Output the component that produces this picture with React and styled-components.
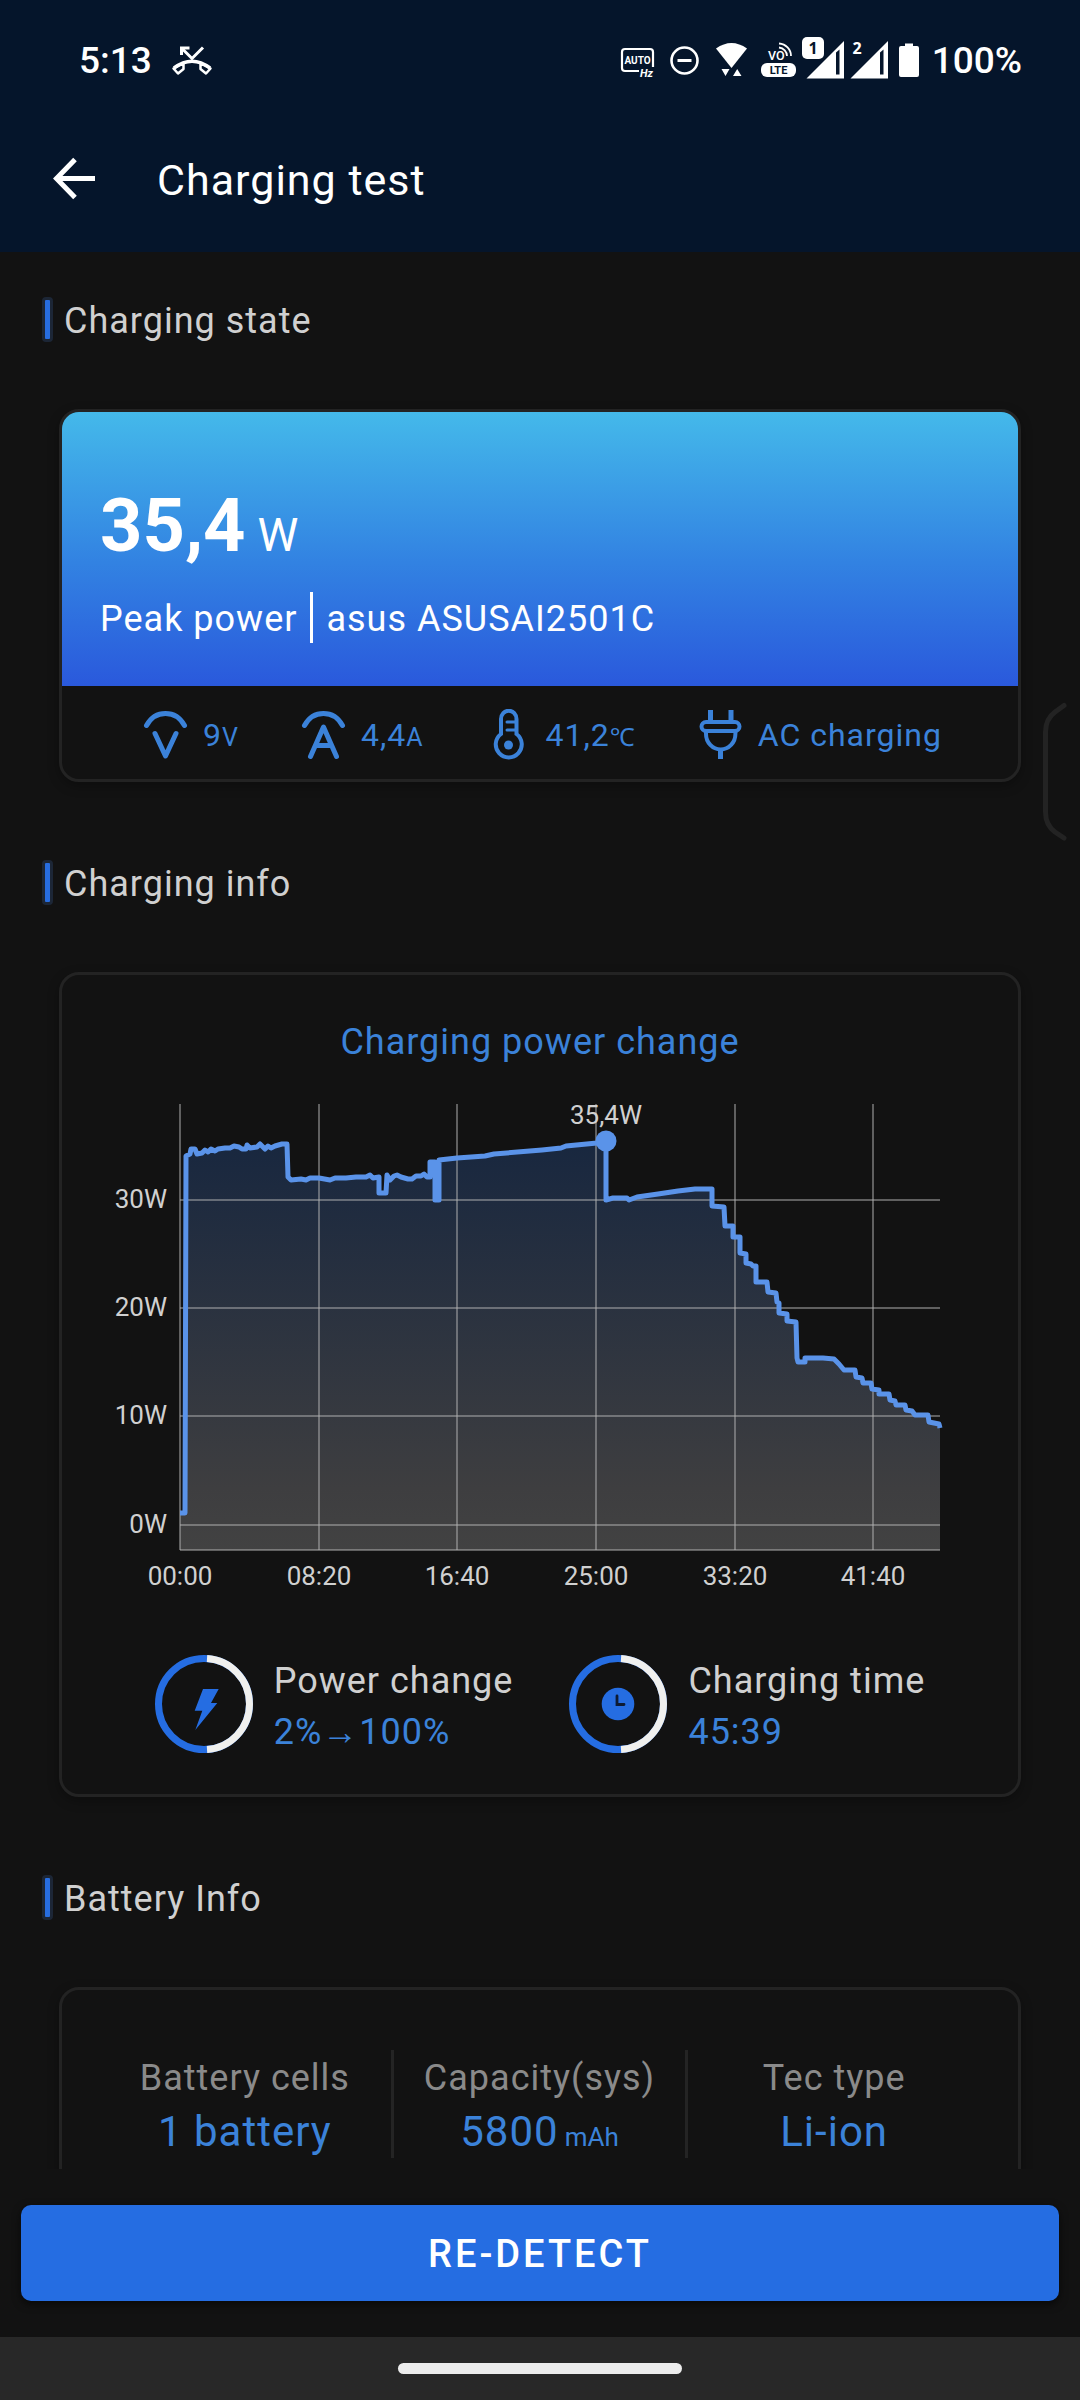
import React from "react";
import styled, { createGlobalStyle } from "styled-components";

const GlobalStyle = createGlobalStyle`
  *, *::before, *::after { box-sizing: border-box; }
  body {
    margin: 0;
    background: #121212;
    font-family: Roboto, "Noto Sans", sans-serif;
    letter-spacing: 1px;
  }
  h1, h2, h3, p, dl, dt, dd { margin: 0; font-weight: 400; }
`;

const Screen = styled.div`
  position: relative;
  display: flex;
  flex-direction: column;
  height: 100vh;
  color: #d0d0d0;
`;

const TopArea = styled.header`
  flex: none;
  background: #05152b;
  color: #fff;
`;

const StatusBar = styled.div`
  display: flex;
  align-items: center;
  justify-content: space-between;
  padding: 14px 58px 0 79px;
  height: 106px;
  font-size: 37px;
  font-weight: 500;
  letter-spacing: 0;
`;

const StatusGroup = styled.div`
  display: flex;
  align-items: center;
  gap: ${(p) => p.$gap}px;
`;

const TitleBar = styled.div`
  display: flex;
  align-items: center;
  gap: 49px;
  height: 146px;
  padding: 0 40px;
`;

const BackButton = styled.button`
  display: flex;
  align-items: center;
  justify-content: center;
  width: 68px;
  height: 68px;
  padding: 0;
  border: 0;
  background: none;
  color: inherit;
`;

const Title = styled.h1`
  padding-top: 2px;
  font-size: 43px;
`;

const Content = styled.main`
  flex: 1;
  min-height: 0;
  overflow-y: auto;
  scrollbar-width: none;
`;

const Section = styled.section`
  padding: ${(p) => (p.$first ? 45 : 78)}px 59px 0;
`;

const SectionTitle = styled.h2`
  display: flex;
  gap: 11px;
  height: 45px;
  margin: 0 0 67px -17px;
  font-size: 36px;
  line-height: 49px;

  &::before {
    content: "";
    width: 11px;
    height: 45px;
    border: 3px solid #1c2636;
    border-radius: 4px;
    background: #276de0;
  }
`;

const Card = styled.div`
  overflow: hidden;
  border: 3px solid #232323;
  border-radius: 20px;
  background: #121212;
  box-shadow: 0 4px 12px rgba(0, 0, 0, 0.3);
`;

const Hero = styled.div`
  display: flex;
  flex-direction: column;
  gap: 23px;
  padding: 71px 38px 43px;
  background: linear-gradient(#44b9ea, #3282e2 55%, #2a59dc);
  color: #fff;
`;

const PeakValue = styled.p`
  font-size: 74px;
  font-weight: 700;
  line-height: 86px;
  letter-spacing: 0;
`;

const PeakUnit = styled.span`
  margin-left: 12px;
  font-size: 46px;
  font-weight: 400;
  line-height: 46px;
`;

const PeakRow = styled.p`
  display: flex;
  gap: 13px;
  height: 51px;
  font-size: 36px;
  line-height: 55px;
`;

const PeakDivider = styled.span`
  width: 3px;
  background: #fff;
`;

const Readings = styled.div`
  display: flex;
  align-items: center;
  justify-content: center;
  gap: 62px;
  height: 93px;
  padding: 4px 0 0 5px;
`;

const Reading = styled.div`
  display: flex;
  align-items: center;
  gap: 15px;
  color: #3b82d9;
  font-size: 32px;
  white-space: nowrap;

  svg { flex: none; }
`;

const SmallUnit = styled.small`
  font-size: 25px;
`;

const ChartTitle = styled.h3`
  padding-top: 43px;
  margin-bottom: 23px;
  font-size: 36px;
  line-height: 48px;
  text-align: center;
  color: #3b82d9;
`;

const ChartSvg = styled.svg`
  display: block;
  width: 100%;
  font-size: 26px;
  letter-spacing: 0;
`;

const Summary = styled.div`
  display: flex;
  justify-content: center;
  gap: 56px;
  padding: 49px 0 36px;
`;

const SummaryItem = styled.dl`
  display: flex;
  align-items: center;
  gap: 21px;
  font-size: 36px;
  line-height: 51px;

  dd { color: #3b82d9; }
`;

const SummaryText = styled.div`
  padding-top: 6px;
`;

const BatteryGrid = styled.dl`
  display: grid;
  grid-template-columns: repeat(3, 1fr);
  padding: 60px 38px 72px 34px;
`;

const BatteryCell = styled.div`
  padding-top: 2px;
  border-left: 3px solid ${(p) => (p.$divided ? "#242424" : "transparent")};
  text-align: center;
  line-height: 53px;
  white-space: nowrap;

  dt { font-size: 36px; color: #8a8a8a; }
  dd { font-size: 42px; color: #3b82d9; }
`;

const CapacityUnit = styled.small`
  margin-left: 6px;
  font-size: 26px;
  line-height: 26px;
  letter-spacing: 0;
`;

const Footer = styled.footer`
  flex: none;
  padding: 36px 21px;
`;

const DetectButton = styled.button`
  display: block;
  width: 100%;
  height: 96px;
  padding: 2px 0 0;
  border: 0;
  border-radius: 10px;
  background: #256de2;
  box-shadow: 0 3px 8px rgba(0, 0, 0, 0.6);
  color: #fff;
  font: inherit;
  font-size: 38px;
  font-weight: 500;
  letter-spacing: 3px;
`;

const NavBar = styled.div`
  flex: none;
  display: flex;
  align-items: center;
  justify-content: center;
  height: 63px;
  background: #282828;
`;

const HomePill = styled.span`
  width: 284px;
  height: 11px;
  border-radius: 6px;
  background: #ececec;
`;

const EdgeHandle = styled.svg`
  position: absolute;
  top: 702px;
  right: 12px;
`;

function MissedCallIcon() {
  return (
    <svg width="42" height="46" viewBox="0 -8 42 46" fill="none" stroke="#fff" strokeWidth="3">
      <path d="M32 2.5 21 13.5 11 3.5" />
      <path d="M10.5 10V3H18.500" />
      <path d="M3 23Q21 9.500 39 23" strokeWidth="3.500" />
      <path d="M12.500 18.500V24L7 28.500 2.500 23.500Z M29.500 18.500V24L35 28.500 39.500 23.500Z" strokeLinejoin="round" strokeWidth="2.500" />
    </svg>
  );
}

function AutoHzIcon() {
  return (
    <svg width="42" height="46" viewBox="0 0 42 46" fontWeight="700" fill="#fff">
      <path d="M22 34H8Q5 34 5 31V15Q5 12 8 12H33Q36 12 36 15V30" fill="none" stroke="#fff" strokeWidth="2.200" />
      <text x="20.500" y="27" fontSize="10" textAnchor="middle">AUTO</text>
      <text x="23" y="39.500" fontSize="11" fontStyle="italic">Hz</text>
    </svg>
  );
}

function DoNotDisturbIcon() {
  return (
    <svg width="39" height="46" viewBox="0 0 39 46" fill="none" stroke="#fff" strokeWidth="2.600">
      <circle cx="19.500" cy="23.500" r="13" />
      <path d="M12.500 23.500H26.500" strokeWidth="3" />
    </svg>
  );
}

function WifiIcon() {
  return (
    <svg width="45" height="46" viewBox="0 0 45 46" fill="#fff">
      <path d="M6 11.500Q21.500 .5 37 11.500L21.500 31Z" />
      <path d="M11.500 32H19.500L15.500 39Z M23 39H31.500L27.200 32Z" />
    </svg>
  );
}

function VolteIcon() {
  return (
    <svg width="35" height="46" viewBox="0 0 35 46" fill="#fff">
      <text x="7" y="23" fontSize="12.500" fontWeight="500">VO</text>
      <g fill="none" stroke="#fff" strokeWidth="1.800">
        <path d="M18 6.500A13 12.500 0 0 1 30 19" />
        <path d="M18 10.500A9 8.500 0 0 1 26 19" />
      </g>
      <rect y="26" width="35" height="14" rx="6" />
      <text x="17.500" y="37.200" fontSize="11" fontWeight="700" textAnchor="middle" fill="#05152b">LTE</text>
    </svg>
  );
}

function SignalIcon({ label, badge }) {
  return (
    <svg width={badge ? 42 : 39} height="46" viewBox={badge ? "-4 0 42 46" : "0 0 39 46"} fill="#fff">
      <path d="M.5 41.500 38 4V41.500Z" />
      <path d="M30 15.500 33.500 12.500V37.500H30Z" fill="#05152b" />
      {badge && <rect x="-4" width="22" height="22" rx="5" />}
      <text x="7" y="16.500" fontSize="16" fontWeight="700" textAnchor="middle" fontFamily="Noto Sans, sans-serif" fill={badge ? "#05152b" : "#fff"}>
        {label}
      </text>
    </svg>
  );
}

function BatteryIcon() {
  return (
    <svg width="31" height="46" viewBox="0 0 31 46" fill="#fff">
      <path d="M10 9V6.500H18V9H22Q24 9 24 11V38Q24 40 22 40H6Q4 40 4 38V11Q4 9 6 9Z" />
    </svg>
  );
}

function BackIcon() {
  return (
    <svg width="44" height="44" viewBox="0 0 44 44" fill="none" stroke="#fff" strokeWidth="5">
      <path d="M23 2.500 4.500 21.500 23 40.500M4 21.500H43" />
    </svg>
  );
}

function MeterIcon({ children }) {
  return (
    <svg width="45" height="52" viewBox="0 0 45 52" fill="none" stroke="currentColor" strokeWidth="5" strokeLinecap="round" strokeLinejoin="round">
      <path d="M3.500 16.500Q10 4.500 22.500 4.500T41.500 16.500" />
      {children}
    </svg>
  );
}

function ThermometerIcon() {
  return (
    <svg width="45" height="52" viewBox="0 0 45 52" fill="none" stroke="currentColor" strokeWidth="4">
      <path d="M15 25V10A7.500 8 0 0 1 30.500 10V25A13 13 0 1 1 15 25Z" />
      <circle cx="22.500" cy="36" r="4.500" fill="currentColor" stroke="none" />
      <path d="M21 13H30M21 21H30" strokeWidth="3" strokeLinecap="round" />
    </svg>
  );
}

function PlugIcon() {
  return (
    <svg width="45" height="52" viewBox="0 0 45 52" fill="none" stroke="currentColor" strokeWidth="4">
      <path d="M12.500 1V13M33 1V13M22.500 40V50" strokeWidth="5" />
      <rect x="3.500" y="13" width="38" height="9" rx="4.500" />
      <path d="M8 22V25A14.700 15.500 0 0 0 37.400 25V22" />
    </svg>
  );
}

function Ring({ children }) {
  return (
    <svg width="98" height="98" viewBox="0 0 98 98" fill="none" strokeWidth="7">
      <circle cx="49" cy="49" r="45.500" stroke="#256de2" />
      <path d="M52 3.600A45.500 45.500 0 0 1 52 94.400" stroke="#f0f0ee" />
      {children}
    </svg>
  );
}

// Power curve in plot coordinates: x grows with time, y grows downwards.
const CURVE = `0,409 5,409 6,52 10,50 11,45 15,45 17,50 22,49 25,46 28,48 31,45 35,47 38,45 45,44 50,44
54,42 59,43 62,45 66,45 67,41 70,44 77,43 80,40 85,45 88,42 91,44 95,42 102,40 107,40 108,73 111,76
121,75 126,76 130,74 139,74 150,76 155,74 166,74 176,73 186,73 190,71 193,74 199,73 199,89 206,89
207,71 210,76 214,72 217,71 221,73 228,75 232,75 236,72 241,72 244,70 247,73 250,73 250,58 255,58
255,96 259,96 259,56 277,54 305,52 314,50 362,46 381,44 386,42 417,39 426,37 426,96 433,94 447,94
449,96 457,93 478,90 498,87 515,85 532,85 532,102 544,103 545,122 553,122 553,133 560,133 560,149
566,150 566,159 571,160 573,162 576,162 576,178 587,178 588,188 596,189 597,198 599,199 599,209
607,210 607,217 616,218 617,254 618,258 625,258 625,254 643,254 654,255 659,260 664,266 675,266
676,273 682,274 683,279 691,279 692,285 699,286 699,290 709,290 710,296 715,297 716,301 725,301
726,306 732,307 735,311 748,311 749,318 759,320 760,324`;

const TIMES = [[0, "00:00"], [139, "08:20"], [277, "16:40"], [416, "25:00"], [555, "33:20"], [693, "41:40"]];
const WATTS = [[96, "30W"], [204, "20W"], [312, "10W"], [421, "0W"]];

function PowerChart() {
  return (
    <ChartSvg viewBox="0 0 956 512" role="img" aria-label="Charging power over time">
      <defs>
        <linearGradient id="area" gradientUnits="userSpaceOnUse" x1="0" y1="37" x2="0" y2="446">
          <stop offset="0" stopColor="#18273f" />
          <stop offset="0.85" stopColor="#3e3e40" />
          <stop offset="1" stopColor="#424242" />
        </linearGradient>
      </defs>
      <g transform="translate(118 15)">
        <polygon points={`${CURVE} 760,446 0,446`} fill="url(#area)" />
        <g stroke="#b4b4b4" strokeOpacity="0.65" strokeWidth="1.500">
          {TIMES.map(([x]) => <line key={x} x1={x} x2={x} y1="0" y2="446" />)}
          {WATTS.map(([y]) => <line key={y} x1="0" x2="760" y1={y} y2={y} />)}
          <line x1="0" x2="760" y1="446" y2="446" />
        </g>
        <polyline points={CURVE} fill="none" stroke="#5a93e9" strokeWidth="5" strokeLinejoin="round" />
        <circle cx="426" cy="37" r="10.500" fill="#5a93e9" />
        <g fill="#d0d0d0">
          <text x="426" y="20" textAnchor="middle">35,4W</text>
          {TIMES.map(([x, label]) => <text key={label} x={x} y="481" textAnchor="middle">{label}</text>)}
          {WATTS.map(([y, label]) => <text key={label} x="-13" y={y + 8} textAnchor="end">{label}</text>)}
        </g>
      </g>
    </ChartSvg>
  );
}

export default function App() {
  return (
    <Screen>
      <GlobalStyle />
      <TopArea>
        <StatusBar>
          <StatusGroup $gap={19}>
            <span>5:13</span>
            <MissedCallIcon />
          </StatusGroup>
          <StatusGroup $gap={6}>
            <AutoHzIcon />
            <DoNotDisturbIcon />
            <WifiIcon />
            <VolteIcon />
            <SignalIcon label="1" badge />
            <SignalIcon label="2" />
            <BatteryIcon />
            <span>100%</span>
          </StatusGroup>
        </StatusBar>
        <TitleBar>
          <BackButton aria-label="Back"><BackIcon /></BackButton>
          <Title>Charging test</Title>
        </TitleBar>
      </TopArea>

      <Content>
        <Section $first>
          <SectionTitle>Charging state</SectionTitle>
          <Card>
            <Hero>
              <PeakValue>35,4<PeakUnit>W</PeakUnit></PeakValue>
              <PeakRow>
                <span>Peak power</span>
                <PeakDivider />
                <span>asus ASUSAI2501C</span>
              </PeakRow>
            </Hero>
            <Readings>
              <Reading>
                <MeterIcon><path d="M12 24.500 22.500 47 33 24.500" /></MeterIcon>
                <span>9<SmallUnit>V</SmallUnit></span>
              </Reading>
              <Reading>
                <MeterIcon><path d="M9.500 47.500 22.500 18 35.500 47.500M14.500 36.500H30.500" /></MeterIcon>
                <span>4,4<SmallUnit>A</SmallUnit></span>
              </Reading>
              <Reading>
                <ThermometerIcon />
                <span>41,2<SmallUnit>℃</SmallUnit></span>
              </Reading>
              <Reading>
                <PlugIcon />
                <span>AC charging</span>
              </Reading>
            </Readings>
          </Card>
        </Section>

        <Section>
          <SectionTitle>Charging info</SectionTitle>
          <Card>
            <ChartTitle>Charging power change</ChartTitle>
            <PowerChart />
            <Summary>
              <SummaryItem>
                <Ring>
                  <path d="M48 34H63.700L56 48H62.300L40.300 75 47.300 55.700H39.700Z" fill="#256de2" />
                </Ring>
                <SummaryText>
                  <dt>Power change</dt>
                  <dd>2%→100%</dd>
                </SummaryText>
              </SummaryItem>
              <SummaryItem>
                <Ring>
                  <circle cx="49" cy="49" r="16.300" fill="#256de2" />
                  <path d="M48 41V49.500H55" stroke="#0d1b33" strokeWidth="2.800" strokeLinecap="round" />
                </Ring>
                <SummaryText>
                  <dt>Charging time</dt>
                  <dd>45:39</dd>
                </SummaryText>
              </SummaryItem>
            </Summary>
          </Card>
        </Section>

        <Section>
          <SectionTitle>Battery Info</SectionTitle>
          <Card>
            <BatteryGrid>
              <BatteryCell>
                <dt>Battery cells</dt>
                <dd>1 battery</dd>
              </BatteryCell>
              <BatteryCell $divided>
                <dt>Capacity(sys)</dt>
                <dd>5800<CapacityUnit>mAh</CapacityUnit></dd>
              </BatteryCell>
              <BatteryCell $divided>
                <dt>Tec type</dt>
                <dd>Li-ion</dd>
              </BatteryCell>
            </BatteryGrid>
          </Card>
        </Section>
      </Content>

      <Footer>
        <DetectButton>RE-DETECT</DetectButton>
      </Footer>
      <NavBar><HomePill /></NavBar>

      <EdgeHandle width="26" height="140" viewBox="0 0 26 140" fill="none" stroke="#232323" strokeWidth="5" strokeLinecap="round">
        <path d="M22 3.500 13 10Q3.500 17 3.500 30V110Q3.500 123 13 130L22 136" />
      </EdgeHandle>
    </Screen>
  );
}
